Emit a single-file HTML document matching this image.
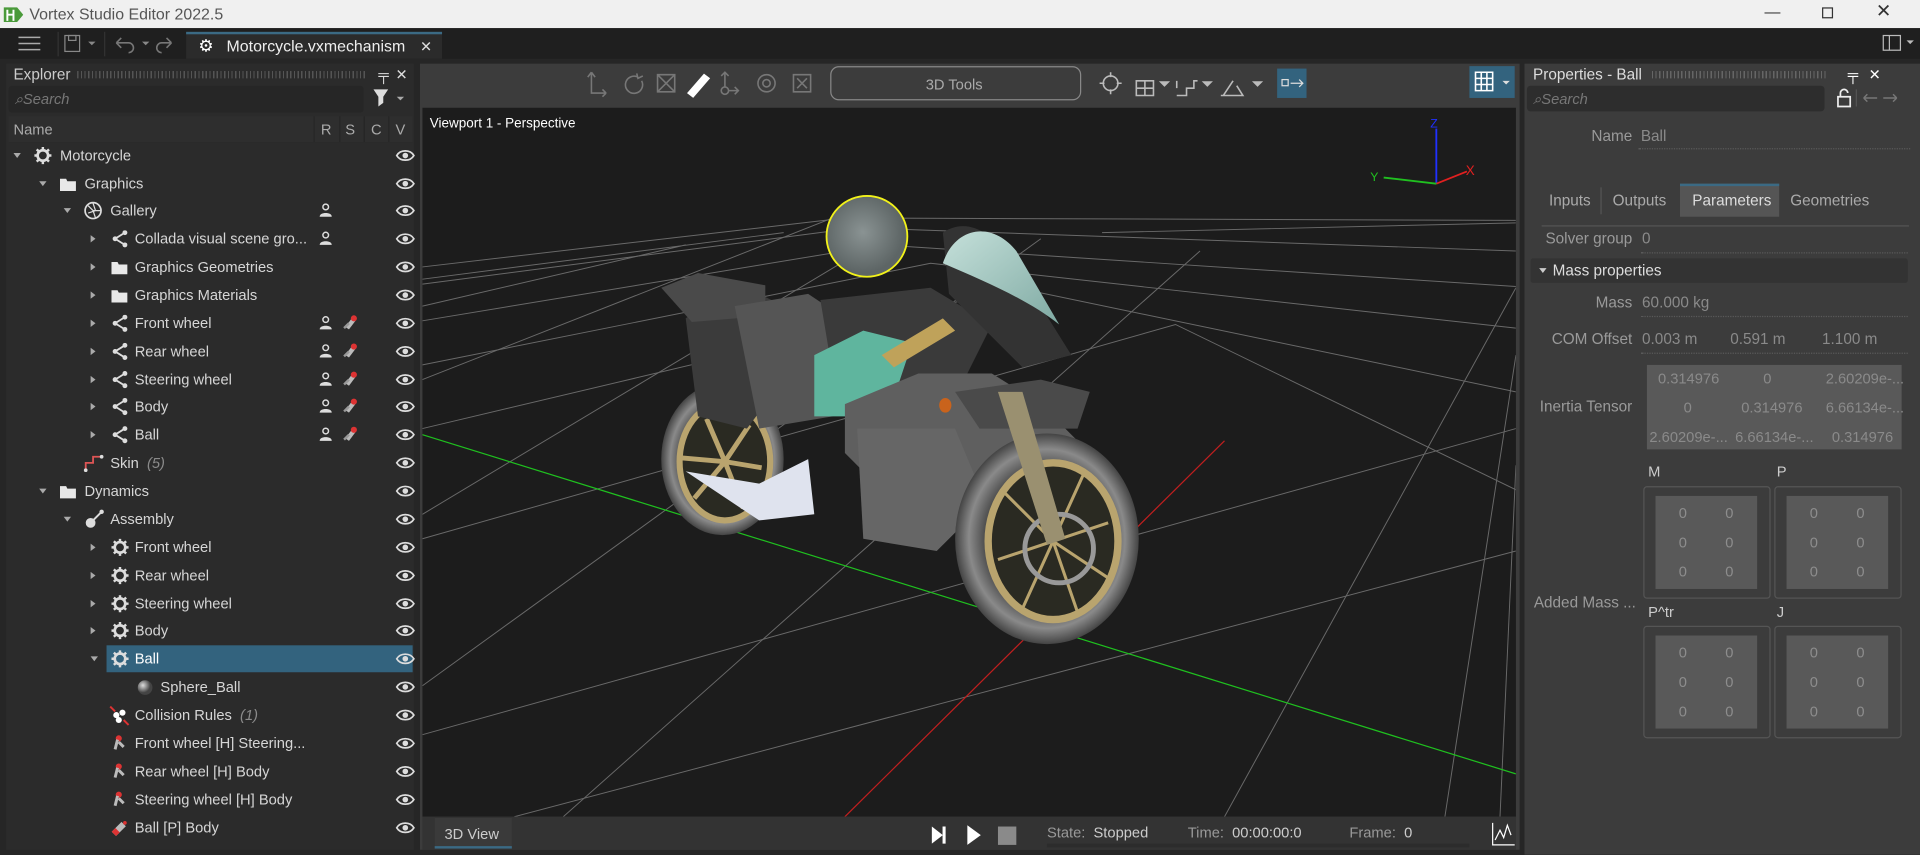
<!DOCTYPE html>
<html><head><meta charset="utf-8">
<style>
*{box-sizing:border-box;margin:0;padding:0}
html,body{width:1920px;height:855px;overflow:hidden;background:#262626}
#w{position:absolute;left:0;top:0;width:1568px;height:698px;transform:scale(1.22449);transform-origin:0 0;font-family:"Liberation Sans",sans-serif;font-size:12px;color:#d6d6d6;background:#262626}
.a{position:absolute}
.t{position:absolute;white-space:nowrap;line-height:14px}
.row{position:absolute;left:5px;width:332px;height:23px}
.row .t{top:4px}
.eye{position:absolute;left:318px;top:5px}
.arr{position:absolute;top:9px;width:0;height:0;border-left:3px solid transparent;border-right:3px solid transparent;border-top:4px solid #aaa}
.arr.r{border-top:3px solid transparent;border-bottom:3px solid transparent;border-left:4px solid #aaa;border-right:0;top:8px}
.g{color:#8a8a8a}
.lab{position:absolute;color:#9a9a9a;text-align:right;white-space:nowrap}
.val{position:absolute;color:#8a8a8a;white-space:nowrap}
.dot{position:absolute;height:0;border-top:1px dotted #5a5a5a}
.mbox{position:absolute;border:1px solid #555;border-radius:3px;width:104px;height:92px}
.mbox .in{position:absolute;left:9px;top:7px;width:83px;height:76px;background:#595959}
.mbox .in span{position:absolute;color:#8d8d8d;font-size:12px}
</style></head><body><div id="w">
<div class="a" style="left:0;top:0;width:1568px;height:23px;background:#f0f0f0"></div>
<svg class="a" style="left:3px;top:5px" width="16" height="14"><path d="M0 1h11l5 6-5 6H0z" fill="#4a9a3a"/><path d="M3 3v9M8 3v9M3 7h5" stroke="#fff" stroke-width="1.6"/></svg>
<div class="t" style="left:24px;top:5px;font-size:13px;color:#555">Vortex Studio Editor 2022.5</div>
<div class="t" style="left:1441px;top:3px;font-size:13px;color:#333">—</div>
<div class="a" style="left:1488px;top:6px;width:9px;height:9px;border:1px solid #333"></div>
<div class="t" style="left:1532px;top:3px;font-size:15px;color:#333">✕</div>
<div class="a" style="left:0;top:23px;width:1568px;height:25px;background:#1f1f1f"></div>
<svg class="a" style="left:15px;top:29px" width="18" height="13"><path d="M0 1.5h18M0 6.5h18M0 11.5h18" stroke="#aaa" stroke-width="1.2"/></svg>
<div class="a" style="left:47px;top:26px;width:1px;height:20px;background:#333"></div>
<svg class="a" style="left:52px;top:28px" width="40" height="16"><rect x="1" y="1" width="12" height="13" fill="none" stroke="#888"/><rect x="4" y="1" width="6" height="4" fill="none" stroke="#888"/><path d="M20 6l3 3 3-3z" fill="#888"/></svg>
<div class="a" style="left:85px;top:26px;width:1px;height:20px;background:#333"></div>
<svg class="a" style="left:92px;top:28px" width="60" height="16"><path d="M3 7h10a4 4 0 0 1 0 8M3 7l4-4M3 7l4 4" fill="none" stroke="#777" stroke-width="1.3"/><path d="M24 6l3 3 3-3z" fill="#888"/><path d="M48 7h-8a4 4 0 0 0 0 8M48 7l-4-4M48 7l-4 4" fill="none" stroke="#777" stroke-width="1.3"/></svg>
<div class="a" style="left:152px;top:26px;width:209px;height:22px;background:#2b2b2b;border-top:2px solid #3b6a84"></div>
<div class="t" style="left:162px;top:30px;font-size:14px;color:#fff">⚙</div>
<div class="t" style="left:185px;top:31px;font-size:13px;color:#eee">Motorcycle.vxmechanism</div>
<div class="t" style="left:343px;top:31px;font-size:12px;color:#ddd">✕</div>
<svg class="a" style="left:1537px;top:28px" width="28" height="14"><rect x="1" y="1" width="14" height="12" fill="none" stroke="#bbb"/><path d="M6 1v12" stroke="#bbb"/><path d="M20 5l3 3 3-3z" fill="#bbb"/></svg>

<div class="a" style="left:5px;top:52px;width:333px;height:642px;background:#2b2b2b"></div>
<div class="t" style="left:11px;top:54px;font-size:12.5px;color:#ccc">Explorer</div>
<div class="a" style="left:63px;top:58px;width:237px;height:6px;background:repeating-linear-gradient(90deg,#555 0 1px,transparent 1px 3px)"></div>
<div class="t" style="left:309px;top:54px;color:#ddd">╤</div>
<div class="t" style="left:323px;top:54px;color:#ddd">✕</div>
<div class="a" style="left:7px;top:70px;width:290px;height:22px;background:#262626;border-radius:3px"></div>
<div class="t" style="left:12px;top:74px;font-style:italic;color:#777">⌕Search</div>
<svg class="a" style="left:304px;top:72px" width="28" height="18"><path d="M1 1h12l-4 6v5l-4 3V7z" fill="#ddd"/><path d="M20 7l3 3 3-3z" fill="#aaa"/></svg>
<div class="a" style="left:7px;top:95px;width:330px;height:21px;background:#2e2e2e"></div>
<div class="t" style="left:11px;top:99px;color:#aaa">Name</div>
<div class="a" style="left:256px;top:95px;width:1px;height:21px;background:#262626"></div>
<div class="a" style="left:277px;top:95px;width:1px;height:21px;background:#262626"></div>
<div class="a" style="left:297px;top:95px;width:1px;height:21px;background:#262626"></div>
<div class="a" style="left:317px;top:95px;width:1px;height:21px;background:#262626"></div>
<div class="t" style="left:262px;top:99px;color:#aaa">R</div>
<div class="t" style="left:282px;top:99px;color:#aaa">S</div>
<div class="t" style="left:303px;top:99px;color:#aaa">C</div>
<div class="t" style="left:323px;top:99px;color:#aaa">V</div>

<svg width="0" height="0" style="position:absolute"><defs>
<g id="eye"><path d="M1 6C4 1 12 1 15 6 12 11 4 11 1 6z" fill="none" stroke="#ddd" stroke-width="1.4"/><circle cx="8" cy="6" r="2.3" fill="#ddd"/></g>
<g id="per"><circle cx="5" cy="3" r="2.3" fill="none" stroke="#ddd" stroke-width="1.2"/><path d="M0 11c0-4 10-4 10 0z" fill="#ddd"/></g>
<g id="red"><path d="M2 10l6-8 3 2-6 8z" fill="#bbb"/><circle cx="9" cy="3" r="2.5" fill="#d33"/><path d="M1 11l4-4" stroke="#999" stroke-width="2"/></g>
<g id="gear"><circle cx="7" cy="7" r="4.3" fill="none" stroke="#ddd" stroke-width="2.2"/><path d="M7 0v3M7 11v3M0 7h3M11 7h3M2 2l2 2M10 10l2 2M12 2l-2 2M2 12l2-2" stroke="#ddd" stroke-width="2"/></g>
<g id="fold"><path d="M0 2h5l1 2h7v8H0z" fill="#e8e8e8"/></g>
<g id="share"><circle cx="3" cy="7" r="2" fill="#ddd"/><circle cx="11" cy="2" r="2" fill="#ddd"/><circle cx="11" cy="12" r="2" fill="#ddd"/><path d="M3 7l8-5M3 7l8 5" stroke="#ddd" stroke-width="1.5"/></g>
<g id="joint"><circle cx="6" cy="3" r="2.5" fill="#d33"/><path d="M5 4l-2 8M6 6l4 4" stroke="#bbb" stroke-width="2.4"/></g>
</defs></svg>

<div class="row" style="top:116px"><div class="arr" style="left:6px"></div><svg class="a" style="left:23px;top:4px" width="15" height="15"><use href="#gear"/></svg><div class="t" style="left:44px">Motorcycle</div><svg class="eye" width="16" height="12"><use href="#eye"/></svg></div>
<div class="row" style="top:139px"><div class="arr" style="left:27px"></div><svg class="a" style="left:44px;top:5px" width="14" height="13"><use href="#fold"/></svg><div class="t" style="left:64px">Graphics</div><svg class="eye" width="16" height="12"><use href="#eye"/></svg></div>
<div class="row" style="top:161px"><div class="arr" style="left:47px"></div><svg class="a" style="left:63px;top:3px" width="16" height="16"><circle cx="8" cy="8" r="6.5" fill="none" stroke="#ddd" stroke-width="1.4"/><path d="M8 2l2 6-6 2M14 8l-6 0 2 6M4 4l4 4" stroke="#ddd" fill="none"/></svg><div class="t" style="left:85px">Gallery</div><svg class="a" style="left:256px;top:5px" width="10" height="12"><use href="#per"/></svg><svg class="eye" width="16" height="12"><use href="#eye"/></svg></div>
<div class="row" style="top:184px"><div class="arr r" style="left:69px"></div><svg class="a" style="left:86px;top:4px" width="14" height="15"><use href="#share"/></svg><div class="t" style="left:105px">Collada visual scene gro...</div><svg class="a" style="left:256px;top:5px" width="10" height="12"><use href="#per"/></svg><svg class="eye" width="16" height="12"><use href="#eye"/></svg></div>
<div class="row" style="top:207px"><div class="arr r" style="left:69px"></div><svg class="a" style="left:86px;top:5px" width="14" height="13"><use href="#fold"/></svg><div class="t" style="left:105px">Graphics Geometries</div><svg class="eye" width="16" height="12"><use href="#eye"/></svg></div>
<div class="row" style="top:230px"><div class="arr r" style="left:69px"></div><svg class="a" style="left:86px;top:5px" width="14" height="13"><use href="#fold"/></svg><div class="t" style="left:105px">Graphics Materials</div><svg class="eye" width="16" height="12"><use href="#eye"/></svg></div>
<div class="row" style="top:253px"><div class="arr r" style="left:69px"></div><svg class="a" style="left:86px;top:4px" width="14" height="15"><use href="#share"/></svg><div class="t" style="left:105px">Front wheel</div><svg class="a" style="left:256px;top:5px" width="10" height="12"><use href="#per"/></svg><svg class="a" style="left:275px;top:4px" width="13" height="13"><use href="#red"/></svg><svg class="eye" width="16" height="12"><use href="#eye"/></svg></div>
<div class="row" style="top:276px"><div class="arr r" style="left:69px"></div><svg class="a" style="left:86px;top:4px" width="14" height="15"><use href="#share"/></svg><div class="t" style="left:105px">Rear wheel</div><svg class="a" style="left:256px;top:5px" width="10" height="12"><use href="#per"/></svg><svg class="a" style="left:275px;top:4px" width="13" height="13"><use href="#red"/></svg><svg class="eye" width="16" height="12"><use href="#eye"/></svg></div>
<div class="row" style="top:299px"><div class="arr r" style="left:69px"></div><svg class="a" style="left:86px;top:4px" width="14" height="15"><use href="#share"/></svg><div class="t" style="left:105px">Steering wheel</div><svg class="a" style="left:256px;top:5px" width="10" height="12"><use href="#per"/></svg><svg class="a" style="left:275px;top:4px" width="13" height="13"><use href="#red"/></svg><svg class="eye" width="16" height="12"><use href="#eye"/></svg></div>
<div class="row" style="top:321px"><div class="arr r" style="left:69px"></div><svg class="a" style="left:86px;top:4px" width="14" height="15"><use href="#share"/></svg><div class="t" style="left:105px">Body</div><svg class="a" style="left:256px;top:5px" width="10" height="12"><use href="#per"/></svg><svg class="a" style="left:275px;top:4px" width="13" height="13"><use href="#red"/></svg><svg class="eye" width="16" height="12"><use href="#eye"/></svg></div>
<div class="row" style="top:344px"><div class="arr r" style="left:69px"></div><svg class="a" style="left:86px;top:4px" width="14" height="15"><use href="#share"/></svg><div class="t" style="left:105px">Ball</div><svg class="a" style="left:256px;top:5px" width="10" height="12"><use href="#per"/></svg><svg class="a" style="left:275px;top:4px" width="13" height="13"><use href="#red"/></svg><svg class="eye" width="16" height="12"><use href="#eye"/></svg></div>
<div class="row" style="top:367px"><svg class="a" style="left:63px;top:4px" width="17" height="15"><path d="M2 13V7h6V2h7" fill="none" stroke="#d55" stroke-width="1.5"/><circle cx="2" cy="13" r="1.5" fill="#ddd"/><circle cx="15" cy="2" r="1.5" fill="#ddd"/></svg><div class="t" style="left:85px">Skin <i class="g">&nbsp;(5)</i></div><svg class="eye" width="16" height="12"><use href="#eye"/></svg></div>
<div class="row" style="top:390px"><div class="arr" style="left:27px"></div><svg class="a" style="left:44px;top:5px" width="14" height="13"><use href="#fold"/></svg><div class="t" style="left:64px">Dynamics</div><svg class="eye" width="16" height="12"><use href="#eye"/></svg></div>
<div class="row" style="top:413px"><div class="arr" style="left:47px"></div><svg class="a" style="left:63px;top:3px" width="17" height="17"><circle cx="6" cy="11" r="4" fill="#ddd"/><path d="M6 11l9-9" stroke="#ddd" stroke-width="1.6"/><circle cx="15" cy="2" r="1.8" fill="#ddd"/></svg><div class="t" style="left:85px">Assembly</div><svg class="eye" width="16" height="12"><use href="#eye"/></svg></div>
<div class="row" style="top:436px"><div class="arr r" style="left:69px"></div><svg class="a" style="left:86px;top:4px" width="15" height="15"><use href="#gear"/></svg><div class="t" style="left:105px">Front wheel</div><svg class="eye" width="16" height="12"><use href="#eye"/></svg></div>
<div class="row" style="top:459px"><div class="arr r" style="left:69px"></div><svg class="a" style="left:86px;top:4px" width="15" height="15"><use href="#gear"/></svg><div class="t" style="left:105px">Rear wheel</div><svg class="eye" width="16" height="12"><use href="#eye"/></svg></div>
<div class="row" style="top:482px"><div class="arr r" style="left:69px"></div><svg class="a" style="left:86px;top:4px" width="15" height="15"><use href="#gear"/></svg><div class="t" style="left:105px">Steering wheel</div><svg class="eye" width="16" height="12"><use href="#eye"/></svg></div>
<div class="row" style="top:504px"><div class="arr r" style="left:69px"></div><svg class="a" style="left:86px;top:4px" width="15" height="15"><use href="#gear"/></svg><div class="t" style="left:105px">Body</div><svg class="eye" width="16" height="12"><use href="#eye"/></svg></div>
<div class="a" style="left:87px;top:527px;width:250px;height:22px;background:#33637e"></div>
<div class="row" style="top:527px"><div class="arr" style="left:69px"></div><svg class="a" style="left:86px;top:4px" width="15" height="15"><use href="#gear"/></svg><div class="t" style="left:105px;color:#fff">Ball</div><svg class="eye" width="16" height="12"><use href="#eye"/></svg></div>
<div class="row" style="top:550px"><svg class="a" style="left:107px;top:5px" width="13" height="13"><defs><radialGradient id="sg" cx="0.35" cy="0.35"><stop offset="0" stop-color="#ddd"/><stop offset="1" stop-color="#444"/></radialGradient></defs><circle cx="6.5" cy="6.5" r="6" fill="url(#sg)"/></svg><div class="t" style="left:126px">Sphere_Ball</div><svg class="eye" width="16" height="12"><use href="#eye"/></svg></div>
<div class="row" style="top:573px"><svg class="a" style="left:84px;top:3px" width="17" height="17"><circle cx="6" cy="8" r="2.5" fill="#fff"/><circle cx="11" cy="6" r="2.5" fill="#fff"/><circle cx="8" cy="12" r="2.5" fill="#fff"/><path d="M1 1l4 4M16 16l-4-4" stroke="#d33" stroke-width="1.6"/></svg><div class="t" style="left:105px">Collision Rules <i class="g">&nbsp;(1)</i></div><svg class="eye" width="16" height="12"><use href="#eye"/></svg></div>
<div class="row" style="top:596px"><svg class="a" style="left:86px;top:4px" width="14" height="15"><use href="#joint"/></svg><div class="t" style="left:105px">Front wheel [H] Steering...</div><svg class="eye" width="16" height="12"><use href="#eye"/></svg></div>
<div class="row" style="top:619px"><svg class="a" style="left:86px;top:4px" width="14" height="15"><use href="#joint"/></svg><div class="t" style="left:105px">Rear wheel [H] Body</div><svg class="eye" width="16" height="12"><use href="#eye"/></svg></div>
<div class="row" style="top:642px"><svg class="a" style="left:86px;top:4px" width="14" height="15"><use href="#joint"/></svg><div class="t" style="left:105px">Steering wheel [H] Body</div><svg class="eye" width="16" height="12"><use href="#eye"/></svg></div>
<div class="row" style="top:665px"><svg class="a" style="left:86px;top:4px" width="14" height="15"><path d="M2 12l8-8" stroke="#bbb" stroke-width="5"/><path d="M2 12l3-3" stroke="#d33" stroke-width="5"/><circle cx="11" cy="3" r="1.5" fill="#d33"/></svg><div class="t" style="left:105px">Ball [P] Body</div><svg class="eye" width="16" height="12"><use href="#eye"/></svg></div>

<div class="a" style="left:343px;top:52px;width:898px;height:642px;background:#3c3c3c"></div>
<svg class="a" style="left:475px;top:56px" width="200" height="26" fill="none" stroke="#777" stroke-width="1.3">
<path d="M8 3v17h12M8 3l-3 4M8 3l3 4M20 20l-3-3M20 20l-3 3"/>
<path d="M46 7a7 7 0 1 0 3 3M45 4l1 4 4-2"/>
<path d="M62 5h14v14H62zM62 5l14 14M76 5L62 19"/>
<path d="M87 20l13-15 4 3-13 15z" fill="#fff" stroke="#fff"/>
<path d="M117 3v12M114 6l3-3 3 3"/><circle cx="117" cy="18" r="3"/><path d="M120 18h8M125 15l3 3-3 3"/>
<circle cx="151" cy="12" r="7"/><circle cx="151" cy="12" r="3"/>
<path d="M173 5h14v14h-14zM176 8l8 8M184 8l-8 8"/>
</svg>
<div class="a" style="left:678px;top:54px;width:205px;height:28px;border:1px solid #888;border-radius:7px"></div>
<div class="t" style="left:756px;top:62px;color:#aaa">3D Tools</div>
<svg class="a" style="left:897px;top:56px" width="140" height="26" fill="none" stroke="#bbb" stroke-width="1.3">
<circle cx="10" cy="12" r="6"/><path d="M10 3v4M10 17v4M1 12h4M15 12h4"/>
<path d="M31 10h14v12H31zM38 10v12M31 16h14"/><path d="M51 11l3 3 3-3z" fill="#bbb"/>
<path d="M64 22h8v-6h6v-6h3M64 10v6"/><path d="M86 11l3 3 3-3z" fill="#bbb"/>
<path d="M102 22l8-12M100 22h18l-5-8"/><path d="M127 11l3 3 3-3z" fill="#bbb"/>
</svg>
<div class="a" style="left:1043px;top:56px;width:24px;height:24px;background:#33637e"></div>
<svg class="a" style="left:1045px;top:62px" width="22" height="12" fill="none" stroke="#ddd"><rect x="2" y="3" width="5" height="5"/><path d="M9 6h10M16 3l3 3-3 3"/></svg>
<div class="a" style="left:1200px;top:54px;width:37px;height:26px;background:#33637e"></div>
<svg class="a" style="left:1204px;top:58px" width="32" height="18"><path d="M1 1h14v15H1zM1 6h14M1 11h14M5.7 1v15M10.3 1v15" fill="none" stroke="#fff" stroke-width="1.3"/><path d="M23 8l3 3 3-3z" fill="#ddd"/></svg>

<div class="a" style="left:345px;top:88px;width:893px;height:579px;background:#1c1c1c;overflow:hidden">
<svg width="893" height="579" viewBox="345 88 893 579" style="position:absolute;left:0;top:0">
<g stroke="#8a8a8a" stroke-width="0.8" opacity="0.7" fill="none">
<path d="M345 218L690 178 1238 180"/>
<path d="M345 232L700 186 1238 205"/>
<path d="M345 262L720 200 1238 234"/>
<path d="M345 298L760 215 1238 268"/>
<path d="M345 350L830 235 1238 320"/>
<path d="M345 440L960 265 1238 400"/>
<path d="M345 600L1238 350"/>
<path d="M420 667L1238 450"/>
<path d="M680 178L345 310M740 183L345 420M850 195L345 560M980 205L460 667"/>
<path d="M1238 235L1000 667M1238 290L1180 667M1238 380L1225 667"/>
<path d="M560 200L345 250M640 190L345 228"/>
<path d="M1238 182L900 190"/>
</g>
<path d="M345 355L1238 632" stroke="#1fc01f" stroke-width="1"/>
<path d="M690 667L1000 360" stroke="#c01f1f" stroke-width="1"/>
<path d="M1173 150V105" stroke="#2030ff" stroke-width="1.5"/><text x="1168" y="104" fill="#2030ff" font-size="10" font-family="Liberation Sans">Z</text>
<path d="M1173 150L1198 140" stroke="#e02020" stroke-width="1.5"/><text x="1197" y="143" fill="#e02020" font-size="11" font-family="Liberation Sans">X</text>
<path d="M1173 150L1130 145" stroke="#20c020" stroke-width="1.5"/><text x="1119" y="148" fill="#20c020" font-size="10" font-family="Liberation Sans">Y</text>
<defs>
<radialGradient id="tire" cx="0.5" cy="0.5"><stop offset="0.6" stop-color="#333"/><stop offset="0.85" stop-color="#8a8a8a"/><stop offset="1" stop-color="#444"/></radialGradient>
<radialGradient id="ball" cx="0.45" cy="0.45"><stop offset="0" stop-color="#8a9393"/><stop offset="1" stop-color="#5d6565"/></radialGradient>
<linearGradient id="wind" x1="0" y1="0" x2="1" y2="1"><stop offset="0" stop-color="#c5e0da"/><stop offset="1" stop-color="#7faaa3"/></linearGradient>
</defs>
<ellipse cx="590" cy="375" rx="50" ry="62" fill="url(#tire)"/>
<ellipse cx="592" cy="377" rx="37" ry="48" fill="#2a2a22" stroke="#b9a46e" stroke-width="5"/>
<g stroke="#b9a46e" stroke-width="4"><path d="M592 377l-15-35M592 377l20-30M592 377l30 5M592 377l15 38M592 377l-25 30M592 377l-35-3"/></g>
<path d="M560 260l40-30 40 20 0 60-30 40-40-10z" fill="#3b3b3b"/>
<path d="M540 235l30-12 55 10 0 25-60 5z" fill="#4a4a4a"/>
<path d="M600 250l60-10 30 20-10 80-60 10z" fill="#555"/>
<path d="M670 245l90-10 50 30-30 60-100-20z" fill="#3a3a3a"/>
<path d="M665 290l40-20 40 10 -20 60-60 0z" fill="#5fb59e"/>
<path d="M770 190c30-20 60 20 80 60l25 40-40 10-60-60z" fill="#333"/>
<path d="M770 215c10-30 40-35 60-10l35 60c-25-20-60-35-95-50z" fill="url(#wind)"/>
<path d="M690 330l60-25 60 0 40 25 30 30-30 60-60 10-60-20-40-40z" fill="#5f5f5f"/>
<path d="M700 350l80 0 25 60-40 40-60-10z" fill="#666"/>
<path d="M560 385l60 10 40 -20 5 45-45 5z" fill="#dfe3ee"/>
<path d="M720 290l50-30 10 10-50 30z" fill="#bfa25a"/>
<path d="M780 320l70-10 40 10-10 30-80 0z" fill="#4a4a4a"/>
<ellipse cx="855" cy="440" rx="75" ry="86" fill="url(#tire)"/>
<ellipse cx="860" cy="442" rx="53" ry="64" fill="#2a2a22" stroke="#b9a46e" stroke-width="6"/>
<g stroke="#b9a46e" stroke-width="2.5"><path d="M860 442l-10-60M860 442l25-55M860 442l45-15M860 442l45 30M860 442l20 58M860 442l-25 55M860 442l-45 15M860 442l-40-40"/></g>
<circle cx="865" cy="448" r="28" fill="none" stroke="#999" stroke-width="4"/>
<path d="M815 320l20 0 35 120-15 5z" fill="#9a9070"/>
<ellipse cx="772" cy="331" rx="5" ry="6" fill="#c9631c"/>
<circle cx="708" cy="193" r="33" fill="url(#ball)" stroke="#f2f21a" stroke-width="1.5"/>
</svg>
<div class="t" style="left:6px;top:6px;font-size:11px;color:#fff">Viewport 1 - Perspective</div>
</div>
<div class="a" style="left:345px;top:667px;width:893px;height:27px;background:#333"></div>
<div class="a" style="left:355px;top:668px;width:63px;height:25px;background:#3a3a3a;border-bottom:2px solid #3b6a84"></div>
<div class="t" style="left:363px;top:674px;color:#ccc">3D View</div>
<svg class="a" style="left:760px;top:673px" width="72" height="18"><path d="M1 2l9 7-9 7z" fill="#fff"/><path d="M11 2v14" stroke="#fff" stroke-width="2.5"/><path d="M30 1l11 8-11 8z" fill="#fff"/><rect x="55" y="2" width="15" height="15" fill="#8a8a8a"/></svg>
<div class="t" style="left:855px;top:673px;color:#999">State:&nbsp; <span style="color:#ccc">Stopped</span></div>
<div class="t" style="left:970px;top:673px;color:#999">Time:&nbsp; <span style="color:#ccc">00:00:00:0</span></div>
<div class="t" style="left:1102px;top:673px;color:#999">Frame:&nbsp; <span style="color:#ccc">0</span></div>
<div class="a" style="left:855px;top:689px;width:345px;height:3px;background:#2c2c2c"></div>
<svg class="a" style="left:1218px;top:671px" width="20" height="20"><path d="M1 1v18h18" stroke="#fff" fill="none"/><path d="M3 15l4-8 3 6 3-10 3 8" stroke="#fff" fill="none"/></svg>

<div class="a" style="left:1245px;top:52px;width:323px;height:646px;background:#3c3c3c"></div>
<div class="t" style="left:1252px;top:54px;font-size:12.5px;color:#ddd">Properties - Ball</div>
<div class="a" style="left:1349px;top:58px;width:143px;height:6px;background:repeating-linear-gradient(90deg,#666 0 1px,transparent 1px 3px)"></div>
<div class="t" style="left:1509px;top:54px;color:#fff">╤</div>
<div class="t" style="left:1526px;top:54px;color:#fff">✕</div>
<div class="a" style="left:1247px;top:70px;width:243px;height:21px;background:#2d2d2d;border-radius:3px"></div>
<div class="t" style="left:1252px;top:74px;font-style:italic;color:#777">⌕Search</div>
<svg class="a" style="left:1498px;top:71px" width="68" height="18"><path d="M3 8h10v8H3zM5 8V5a3 3 0 0 1 6 0" fill="none" stroke="#eee" stroke-width="1.4"/><path d="M18 2v14" stroke="#555"/><path d="M24 9h11M24 9l3-3M24 9l3 3M40 9h11M51 9l-3-3M51 9l-3 3" stroke="#777" stroke-width="1.2" fill="none"/></svg>
<div class="lab" style="left:1260px;width:73px;top:104px;font-size:12.5px">Name</div>
<div class="val" style="left:1340px;top:104px;font-size:12.5px">Ball</div>
<div class="dot" style="left:1338px;top:121px;width:222px"></div>
<div class="a" style="left:1259px;top:184px;width:300px;height:1px;background:#555"></div>
<div class="t" style="left:1265px;top:157px;font-size:12.5px;color:#aaa">Inputs</div>
<div class="a" style="left:1307px;top:153px;width:1px;height:22px;background:#555"></div>
<div class="t" style="left:1317px;top:157px;font-size:12.5px;color:#aaa">Outputs</div>
<div class="a" style="left:1372px;top:150px;width:81px;height:27px;background:#555;border-top:2px solid #3b6a84"></div>
<div class="t" style="left:1382px;top:157px;font-size:12.5px;color:#ddd">Parameters</div>
<div class="t" style="left:1462px;top:157px;font-size:12.5px;color:#aaa">Geometries</div>
<div class="lab" style="left:1260px;width:73px;top:188px;font-size:12.5px">Solver group</div>
<div class="val" style="left:1341px;top:188px;font-size:12.5px">0</div>
<div class="dot" style="left:1340px;top:206px;width:218px"></div>
<div class="a" style="left:1250px;top:211px;width:308px;height:20px;background:#333;border-radius:2px"></div>
<div class="a" style="left:1257px;top:219px;border-left:3px solid transparent;border-right:3px solid transparent;border-top:4px solid #ccc"></div>
<div class="t" style="left:1268px;top:214px;font-size:12.5px;color:#ddd">Mass properties</div>
<div class="lab" style="left:1260px;width:73px;top:240px;font-size:12.5px">Mass</div>
<div class="val" style="left:1341px;top:240px;font-size:12.5px">60.000 kg</div>
<div class="dot" style="left:1340px;top:258px;width:218px"></div>
<div class="lab" style="left:1250px;width:83px;top:270px;font-size:12.5px">COM Offset</div>
<div class="val" style="left:1341px;top:270px;font-size:12.5px">0.003 m</div>
<div class="val" style="left:1413px;top:270px;font-size:12.5px">0.591 m</div>
<div class="val" style="left:1488px;top:270px;font-size:12.5px">1.100 m</div>
<div class="dot" style="left:1340px;top:288px;width:218px"></div>
<div class="a" style="left:1345px;top:298px;width:208px;height:69px;background:#595959"></div>
<div class="val" style="left:1354px;top:302px">0.314976</div><div class="val" style="left:1440px;top:302px">0</div><div class="val" style="left:1491px;top:302px">2.60209e-...</div>
<div class="val" style="left:1375px;top:326px">0</div><div class="val" style="left:1422px;top:326px">0.314976</div><div class="val" style="left:1491px;top:326px">6.66134e-...</div>
<div class="val" style="left:1347px;top:350px">2.60209e-...</div><div class="val" style="left:1417px;top:350px">6.66134e-...</div><div class="val" style="left:1496px;top:350px">0.314976</div>
<div class="lab" style="left:1250px;width:83px;top:325px;font-size:12.5px">Inertia Tensor</div>
<div class="t" style="left:1346px;top:378px;color:#ccc">M</div>
<div class="t" style="left:1451px;top:378px;color:#ccc">P</div>
<div class="t" style="left:1346px;top:493px;color:#ccc">P^tr</div>
<div class="t" style="left:1451px;top:493px;color:#ccc">J</div>
<div class="lab" style="left:1250px;width:86px;top:485px;font-size:12.5px">Added Mass ...</div>
<div class="mbox" style="left:1342px;top:397px"><div class="in"><span style="left:19px;top:7px">0</span><span style="left:57px;top:7px">0</span><span style="left:19px;top:31px">0</span><span style="left:57px;top:31px">0</span><span style="left:19px;top:55px">0</span><span style="left:57px;top:55px">0</span></div></div>
<div class="mbox" style="left:1449px;top:397px"><div class="in"><span style="left:19px;top:7px">0</span><span style="left:57px;top:7px">0</span><span style="left:19px;top:31px">0</span><span style="left:57px;top:31px">0</span><span style="left:19px;top:55px">0</span><span style="left:57px;top:55px">0</span></div></div>
<div class="mbox" style="left:1342px;top:511px"><div class="in"><span style="left:19px;top:7px">0</span><span style="left:57px;top:7px">0</span><span style="left:19px;top:31px">0</span><span style="left:57px;top:31px">0</span><span style="left:19px;top:55px">0</span><span style="left:57px;top:55px">0</span></div></div>
<div class="mbox" style="left:1449px;top:511px"><div class="in"><span style="left:19px;top:7px">0</span><span style="left:57px;top:7px">0</span><span style="left:19px;top:31px">0</span><span style="left:57px;top:31px">0</span><span style="left:19px;top:55px">0</span><span style="left:57px;top:55px">0</span></div></div>
</div></body></html>
